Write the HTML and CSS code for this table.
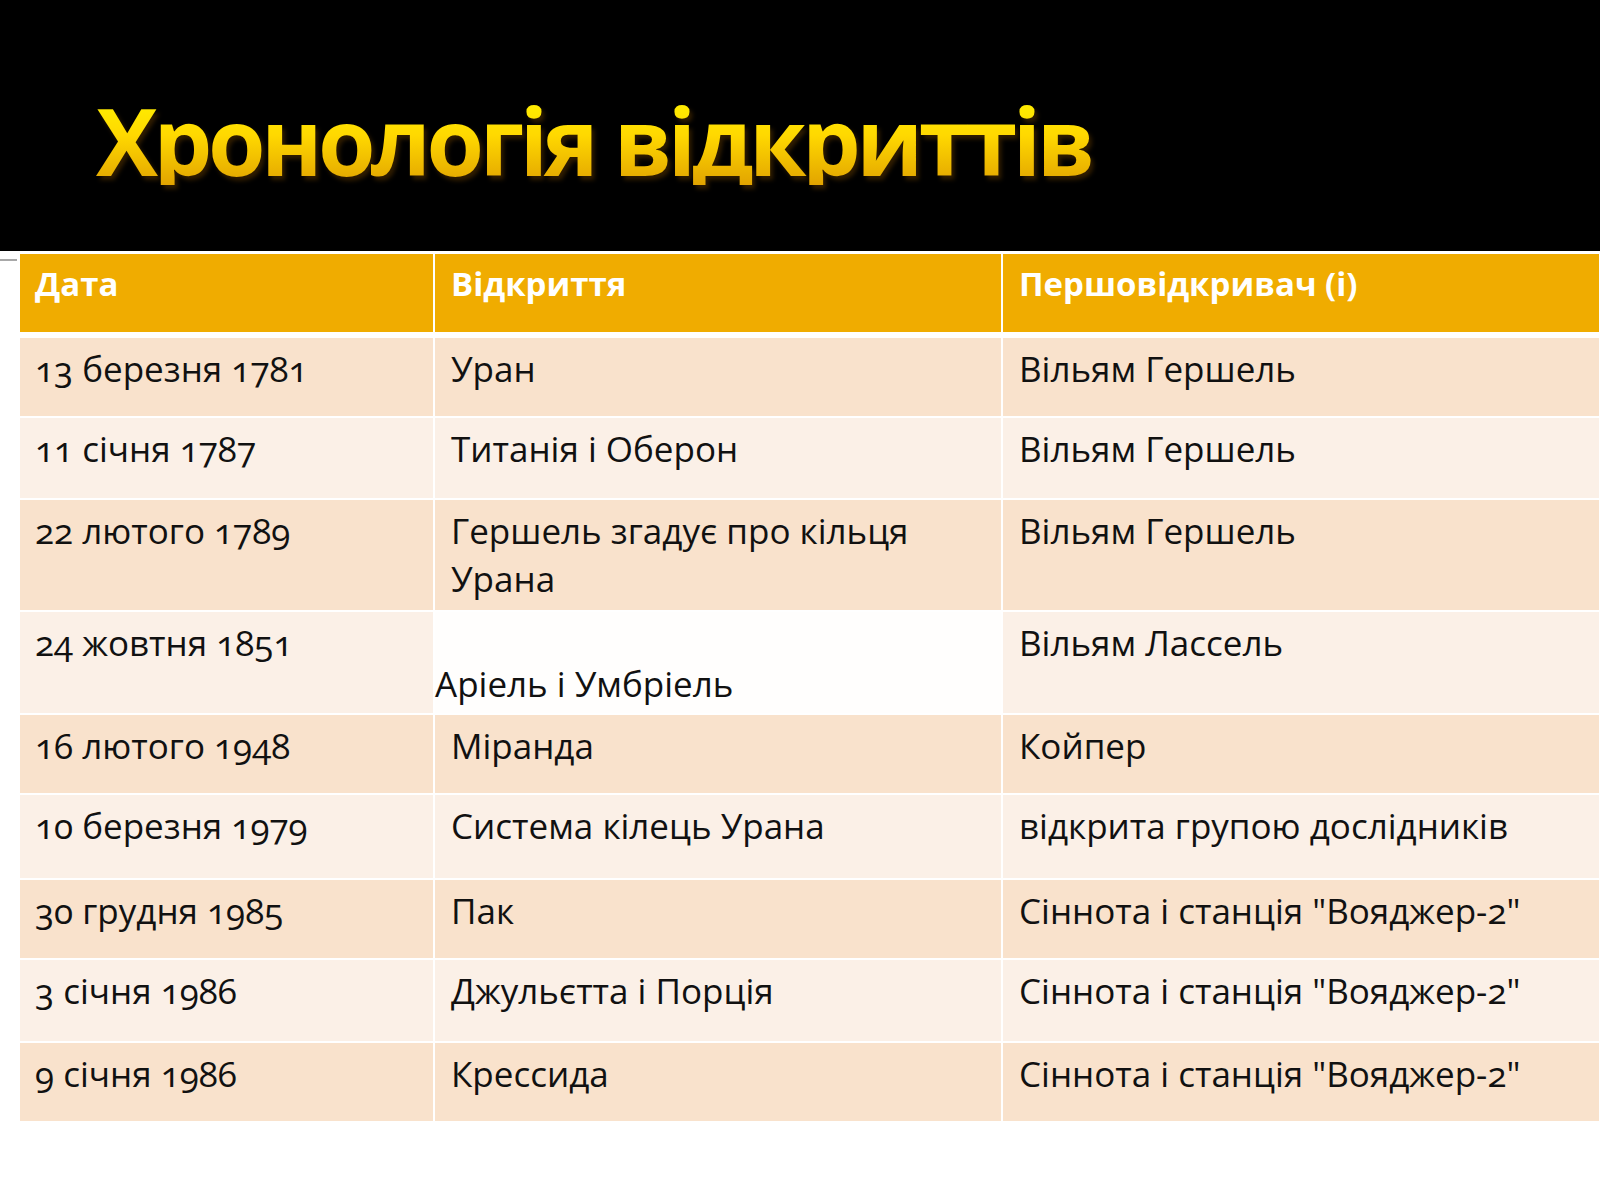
FILE: index.html
```html
<!DOCTYPE html>
<html lang="uk">
<head>
<meta charset="utf-8">
<title>Хронологія відкриттів</title>
<link rel="stylesheet" href="styles.css">
</head>
<body>
<header class="title-bar">
  <h1 class="title">Хронологія відкриттів</h1>
</header>
<main class="slide-body">
  <div class="gutter"><span class="tick"></span></div>
  <div class="table">
    <div class="cell th">Дата</div>
    <div class="cell th">Відкриття</div>
    <div class="cell th">Першовідкривач (і)</div>

    <div class="cell odd">13 березня 1781</div>
    <div class="cell odd">Уран</div>
    <div class="cell odd">Вільям Гершель</div>

    <div class="cell even">11 січня 1787</div>
    <div class="cell even">Титанія і Оберон</div>
    <div class="cell even">Вільям Гершель</div>

    <div class="cell odd">22 лютого 1789</div>
    <div class="cell odd">Гершель згадує про кільця Урана</div>
    <div class="cell odd">Вільям Гершель</div>

    <div class="cell even">24 жовтня 1851</div>
    <div class="cell blank">Аріель і Умбріель</div>
    <div class="cell even">Вільям Лассель</div>

    <div class="cell odd">16 лютого 1948</div>
    <div class="cell odd">Міранда</div>
    <div class="cell odd">Койпер</div>

    <div class="cell even">10 березня 1979</div>
    <div class="cell even">Система кілець Урана</div>
    <div class="cell even">відкрита групою дослідників</div>

    <div class="cell odd">30 грудня 1985</div>
    <div class="cell odd">Пак</div>
    <div class="cell odd">Сіннота і станція "Вояджер-2"</div>

    <div class="cell even">3 січня 1986</div>
    <div class="cell even">Джульєтта і Порція</div>
    <div class="cell even">Сіннота і станція "Вояджер-2"</div>

    <div class="cell odd">9 січня 1986</div>
    <div class="cell odd">Крессида</div>
    <div class="cell odd">Сіннота і станція "Вояджер-2"</div>
  </div>
</main>
</body>
</html>
```
FILE: styles.css
```css
html, body {
  margin: 0;
  padding: 0;
  background: #ffffff;
}

body {
  width: 1600px;
  height: 1200px;
  overflow: hidden;
  font-family: "Open Sans", "Noto Sans", sans-serif;
  color: #111111;
}

.title-bar {
  height: 251px;
  background: #000000;
  box-sizing: border-box;
  padding: 95px 0 0 96px;
}

.title {
  margin: 0;
  font-size: 93px;
  line-height: 90px;
  font-weight: 700;
  letter-spacing: -4.5px;
  background: linear-gradient(180deg, #fff200 0%, #ffd800 45%, #e2a400 100%);
  -webkit-background-clip: text;
  background-clip: text;
  color: transparent;
  filter: drop-shadow(3px 4px 2px rgba(50, 30, 0, 0.95));
  display: inline-block;
}

.slide-body {
  display: flex;
  margin-top: 3px;
}

.gutter {
  width: 20px;
  flex: none;
  padding-top: 5px;
}

.tick {
  display: block;
  width: 17px;
  height: 2px;
  background: #a8a8a8;
}

.table {
  display: grid;
  grid-template-columns: 413px 566px 596px;
  grid-template-rows: 82px 78px 80px 110px 101px 78px 83px 78px 81px 78px;
  column-gap: 2px;
  row-gap: 2px;
}

.cell {
  box-sizing: border-box;
  padding: 7px 12px 0 16px;
  font-size: 35px;
  line-height: 48px;
  font-variant-numeric: oldstyle-nums;
}

.cell:nth-child(3n+1) {
  padding-left: 15px;
}

.th {
  background: #f0ac00;
  color: #ffffff;
  font-weight: 700;
  font-size: 33px;
  padding-top: 6px;
  margin-bottom: 4px;
}

.odd {
  background: #f9e2cc;
}

.even {
  background: #fbf0e7;
}

.blank {
  background: #fffefd;
  padding-top: 48px;
  padding-left: 0;
}
```
